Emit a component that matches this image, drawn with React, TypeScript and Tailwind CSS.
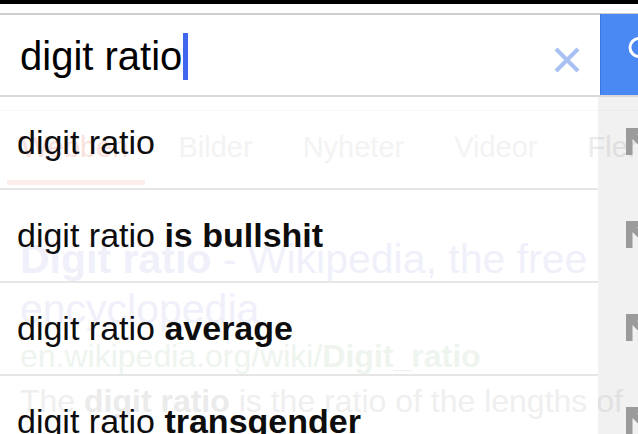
import React from "react";

const font = { fontFamily: '"Liberation Sans", Arial, Helvetica, sans-serif' };

const rows = [
  { base: "digit ratio", bold: "" },
  { base: "digit ratio ", bold: "is bullshit" },
  { base: "digit ratio ", bold: "average" },
  { base: "digit ratio ", bold: "transgender" },
];

function FillArrow() {
  return (
    <svg width="32" height="32" viewBox="0 0 32 32" className="shrink-0">
      <path d="M0 0 H27 V6.5 H11 L31 26.5 L26.5 31 L6.5 11 V27 H0 Z" fill="#9b9b9b" />
    </svg>
  );
}

export default function App() {
  return (
    <div className="w-[638px] h-[434px] overflow-hidden bg-white flex flex-col" style={font}>
      <div className="h-[4px] bg-black shrink-0" />
      <div className="h-[9px] bg-white shrink-0" />
      {/* search input */}
      <div className="h-[84px] shrink-0 flex border-t-2 border-b-2 border-t-[#cdcdcd] border-b-[#d9d9d9]">
        <div className="flex-1 flex items-center pl-[20px] pt-[2px]">
          <span className="text-[40px] leading-[46px] text-black whitespace-nowrap">digit ratio</span>
          <span className="w-[5px] h-[47px] bg-[#3f67ee] ml-[1px]" />
          <svg width="28" height="28" viewBox="0 0 28 28" className="ml-auto mr-[19px] mt-[8px]">
            <path d="M3 3 L25 25 M25 3 L3 25" stroke="#a8c0f2" strokeWidth="4" strokeLinecap="butt" />
          </svg>
        </div>
        <div className="w-[38px] -mt-px bg-[#4a89f3] border-l border-l-[#3b76dc] overflow-hidden pl-[26px] pt-[23px]">
          <svg width="30" height="30" viewBox="0 0 30 30" className="block">
            <circle cx="12" cy="10.5" r="9" fill="none" stroke="#ffffff" strokeWidth="3" />
            <path d="M19 17 L27 25" stroke="#ffffff" strokeWidth="3.5" />
          </svg>
        </div>
      </div>
      {/* results page behind suggestions */}
      <div className="relative flex-1">
        <div className="flex flex-col">
          <div className="mt-[13px] h-px bg-[#f8f8f8]" />
          <div className="mt-[20px] h-[33px] flex gap-[50px] pl-[21px] text-[29px] leading-[33px] whitespace-nowrap">
            <span className="text-[#f9e1de]">Webben</span>
            <span className="text-[#f3f3f3]">Bilder</span>
            <span className="text-[#f3f3f3]">Nyheter</span>
            <span className="text-[#f3f3f3]">Videor</span>
            <span className="text-[#ececec]">Fler</span>
          </div>
          <div className="mt-[16px] ml-[7px] w-[138px] h-[5px] bg-[#fdeeec]" />
          <div className="mt-[49px] pl-[20px] w-[615px] text-[41px] leading-[50px] text-[#f0f0fb]">
            <b>Digit ratio</b> - Wikipedia, the free encyclopedia
          </div>
          <div className="mt-[4px] pl-[20px] text-[32px] leading-[36px] text-[#eef4ee] whitespace-nowrap">
            en.wikipedia.org/wiki/<b>Digit_ratio</b>
          </div>
          <div className="mt-[9px] pl-[20px] text-[32px] leading-[36px] text-[#efefef] whitespace-nowrap">
            The <b className="text-[#ebebeb]">digit ratio</b> is the ratio of the lengths of
          </div>
        </div>
        {/* suggestions overlay */}
        <div className="absolute inset-0 flex flex-col">
          {rows.map((r, i) => (
            <div key={i} className="flex shrink-0 h-[93px]">
              <div className="flex-1 flex items-center pl-[17px] border-b-2 border-b-[#e6e6e6] text-[34px] leading-[39px] text-[#0d0d0d] whitespace-nowrap">
                <span>
                  {r.base}
                  {r.bold && <b>{r.bold}</b>}
                </span>
              </div>
              <div className="w-[40px] bg-black/[0.055] flex items-start pl-[28px] pt-[31px] overflow-hidden">
                <FillArrow />
              </div>
            </div>
          ))}
        </div>
      </div>
    </div>
  );
}
